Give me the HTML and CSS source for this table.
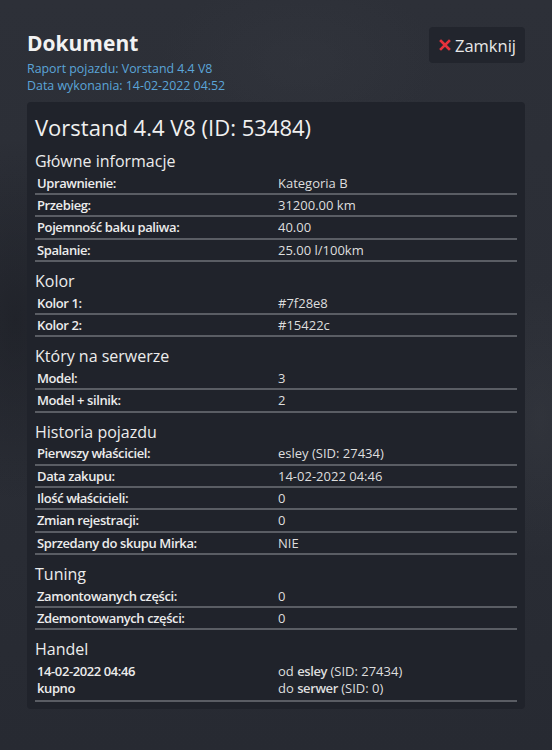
FILE: index.html
```html
<!DOCTYPE html>
<html lang="pl">
<head>
<meta charset="utf-8">
<title>Dokument</title>
<link rel="stylesheet" href="styles.css">
</head>
<body>
<div class="page">
  <header class="top">
    <div class="head-text">
      <h1 class="doc-title">Dokument</h1>
      <div class="sub">Raport pojazdu: Vorstand 4.4 V8</div>
      <div class="sub">Data wykonania: 14-02-2022 04:52</div>
    </div>
    <button class="close-btn" type="button">
      <svg class="close-ic" viewBox="0 0 12 12" width="12" height="12" aria-hidden="true"><path d="M2 2 L10 10 M10 2 L2 10" stroke="#e8323c" stroke-width="2.6" stroke-linecap="square"/></svg>
      <span>Zamknij</span>
    </button>
  </header>

  <main class="card">
    <h2 class="veh-title">Vorstand 4.4 V8 (ID: 53484)</h2>

    <h3 class="sec">Główne informacje</h3>
    <div class="tbl">
      <div class="row"><div class="k">Uprawnienie:</div><div class="v">Kategoria B</div></div>
      <div class="row"><div class="k">Przebieg:</div><div class="v">31200.00 km</div></div>
      <div class="row"><div class="k">Pojemność baku paliwa:</div><div class="v">40.00</div></div>
      <div class="row"><div class="k">Spalanie:</div><div class="v">25.00 l/100km</div></div>
    </div>

    <h3 class="sec">Kolor</h3>
    <div class="tbl">
      <div class="row"><div class="k">Kolor 1:</div><div class="v">#7f28e8</div></div>
      <div class="row"><div class="k">Kolor 2:</div><div class="v">#15422c</div></div>
    </div>

    <h3 class="sec">Który na serwerze</h3>
    <div class="tbl">
      <div class="row"><div class="k">Model:</div><div class="v">3</div></div>
      <div class="row"><div class="k">Model + silnik:</div><div class="v">2</div></div>
    </div>

    <h3 class="sec">Historia pojazdu</h3>
    <div class="tbl">
      <div class="row"><div class="k">Pierwszy właściciel:</div><div class="v">esley (SID: 27434)</div></div>
      <div class="row"><div class="k">Data zakupu:</div><div class="v">14-02-2022 04:46</div></div>
      <div class="row"><div class="k">Ilość właścicieli:</div><div class="v">0</div></div>
      <div class="row"><div class="k">Zmian rejestracji:</div><div class="v">0</div></div>
      <div class="row"><div class="k">Sprzedany do skupu Mirka:</div><div class="v">NIE</div></div>
    </div>

    <h3 class="sec">Tuning</h3>
    <div class="tbl">
      <div class="row"><div class="k">Zamontowanych części:</div><div class="v">0</div></div>
      <div class="row"><div class="k">Zdemontowanych części:</div><div class="v">0</div></div>
    </div>

    <h3 class="sec">Handel</h3>
    <div class="tbl">
      <div class="row row-2">
        <div class="k">14-02-2022 04:46<br>kupno</div>
        <div class="v">od <b>esley</b> (SID: 27434)<br>do <b>serwer</b> (SID: 0)</div>
      </div>
    </div>
  </main>
</div>
</body>
</html>
```

FILE: styles.css
```css
* { box-sizing: border-box; }

html, body {
  margin: 0;
  height: 100%;
}

body {
  font-family: "Open Sans", "Noto Sans", sans-serif;
  color: #e4e4e4;
  background-color: #2b2e36;
  background-image:
    radial-gradient(ellipse 120px 260px at 15px 320px, rgba(20,22,28,0.45), transparent 70%),
    radial-gradient(ellipse 90px 200px at 540px 420px, rgba(60,63,70,0.35), transparent 70%),
    radial-gradient(ellipse 200px 120px at 300px 60px, rgba(55,58,66,0.35), transparent 70%),
    linear-gradient(180deg, #2d3038 0%, #2a2d35 60%, #272a32 100%);
}

.page {
  padding: 27px 27px 0 27px;
}

.top {
  display: flex;
  justify-content: space-between;
  align-items: flex-start;
}

.head-text {
  padding-top: 3px;
}

.doc-title {
  margin: 0 0 4px 0;
  font-size: 21px;
  line-height: 26px;
  font-weight: 700;
  color: #f2f2f2;
}

.sub {
  font-size: 12.4px;
  line-height: 17px;
  color: #5ba5d8;
}

.close-btn {
  display: flex;
  align-items: center;
  gap: 4px;
  height: 36px;
  padding: 0 9px 0 10px;
  border: 0;
  border-radius: 4px;
  background: #22252d;
  color: #e8e8e8;
  font-family: "Open Sans", "Noto Sans", sans-serif;
  font-size: 16.5px;
}

.close-ic {
  display: block;
}

.card {
  margin-top: 8px;
  padding: 11px 8px 7px 8px;
  border-radius: 4px;
  background: #20232b;
}

.veh-title {
  margin: 0 0 1.5px 0;
  font-size: 22px;
  line-height: 29px;
  font-weight: 400;
  color: #f0f0f0;
}

.sec {
  margin: 8px 0 0 0;
  font-size: 16px;
  line-height: 22.67px;
  font-weight: 400;
  color: #ececec;
}

.row {
  display: grid;
  grid-template-columns: 1fr 1fr;
  border-bottom: 2px solid #5a5d64;
  font-size: 13px;
  line-height: 20.33px;
}

.k, .v {
  padding: 0 2px;
}

.k {
  font-weight: 600;
  letter-spacing: -0.4px;
  color: #ececec;
}

.v {
  color: #dedede;
}

.v b {
  font-weight: 600;
  letter-spacing: -0.4px;
}

.row-2 {
  line-height: 17.5px;
  padding: 2px 0 2px 0;
}
```
